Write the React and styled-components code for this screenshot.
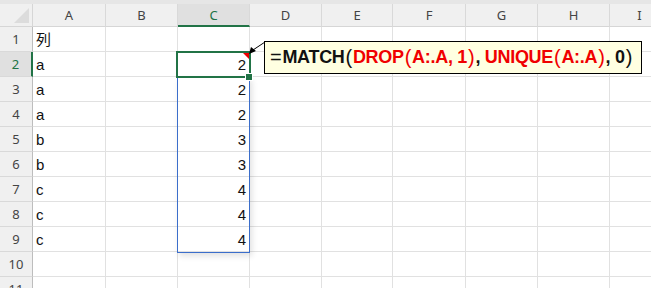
import React from 'react';
import styled, { createGlobalStyle } from 'styled-components';

const GlobalStyle = createGlobalStyle`
    html, body {
        margin: 0;
        padding: 0;
        background: #ffffff;
        overflow: hidden;
    }
    body {
        font-family: "Liberation Sans", "Noto Sans CJK JP", sans-serif;
    }
`;

const COLS = ['A', 'B', 'C', 'D', 'E', 'F', 'G', 'H', 'I'];
const COL_WIDTHS = [73, 72, 72, 72, 71, 73, 72, 72, 60];

const data = [
    ['列', '', ''],
    ['a', '', 2],
    ['a', '', 2],
    ['a', '', 2],
    ['b', '', 3],
    ['b', '', 3],
    ['c', '', 4],
    ['c', '', 4],
    ['c', '', 4],
    ['', '', ''],
    ['', '', ''],
];

const Sheet = styled.div`
    position: relative;
    width: 651px;
    height: 288px;
    overflow: hidden;
    background: #fff;
`;

const TopStrip = styled.div`
    height: 4px;
    background: #e6e6e6;
`;

const Grid = styled.div`
    display: grid;
    grid-template-columns: 33px ${COL_WIDTHS.map((w) => `${w}px`).join(' ')};
    grid-auto-rows: 25px;
    grid-template-rows: 23px;
`;

const Corner = styled.div`
    position: relative;
    background: #f0f0f0;
    border-right: 1px solid #d6d6d6;
    border-bottom: 1px solid #d6d6d6;
    &::after {
        content: '';
        position: absolute;
        right: 3px;
        bottom: 3px;
        width: 0;
        height: 0;
        border-left: 15px solid transparent;
        border-bottom: 15px solid #dcdcdc;
    }
`;

const ColHead = styled.div`
    display: flex;
    align-items: center;
    justify-content: center;
    background: ${({ active }) => (active ? '#e0e0e0' : '#f0f0f0')};
    border-right: 1px solid #d9d9d9;
    border-bottom: ${({ active }) => (active ? '2px solid #217346' : '1px solid #d6d6d6')};
    color: ${({ active }) => (active ? '#217346' : '#444')};
    font-family: "Noto Sans", "Liberation Sans", sans-serif;
    font-size: 13px;
    padding-bottom: ${({ active }) => (active ? '0' : '1px')};
    box-sizing: border-box;
`;

const RowHead = styled.div`
    display: flex;
    align-items: center;
    justify-content: center;
    background: ${({ active }) => (active ? '#e0e0e0' : '#f0f0f0')};
    border-right: ${({ active }) => (active ? '2px solid #217346' : '1px solid #bdbdbd')};
    border-bottom: 1px solid #d9d9d9;
    color: ${({ active }) => (active ? '#217346' : '#444')};
    font-family: "Noto Sans", "Liberation Sans", sans-serif;
    font-size: 13px;
    box-sizing: border-box;
`;

const Cell = styled.div`
    display: flex;
    align-items: flex-end;
    justify-content: ${({ num }) => (num ? 'flex-end' : 'flex-start')};
    border-right: 1px solid #e1e1e1;
    border-bottom: 1px solid #e1e1e1;
    padding: 0 3px 3px 3px;
    font-size: 15px;
    line-height: 17px;
    color: #111;
    box-sizing: border-box;
    overflow: hidden;
    white-space: nowrap;
`;

const Range = styled.div`
    position: absolute;
    left: 177px;
    top: 77px;
    width: 73px;
    height: 176px;
    box-sizing: border-box;
    border: 1px solid #3b6ecb;
    box-shadow: 2px 3px 6px rgba(0, 0, 0, 0.12);
    pointer-events: none;
`;

const ActiveCell = styled.div`
    position: absolute;
    left: 176px;
    top: 51px;
    width: 75px;
    height: 27px;
    box-sizing: border-box;
    border: 2px solid #217346;
    pointer-events: none;
`;

const FillHandle = styled.div`
    position: absolute;
    left: 245px;
    top: 73px;
    width: 6px;
    height: 6px;
    background: #217346;
    border: 1px solid #fff;
`;

const CommentMark = styled.div`
    position: absolute;
    left: 243px;
    top: 53px;
    width: 0;
    height: 0;
    border-left: 6px solid transparent;
    border-top: 6px solid #e00;
`;

const Callout = styled.div`
    position: absolute;
    left: 264px;
    top: 41px;
    width: 378px;
    height: 33px;
    box-sizing: border-box;
    background: #ffffe1;
    border: 1px solid #000;
    display: flex;
    align-items: center;
    padding-left: 4px;
    font-family: "Liberation Sans", "Noto Sans CJK JP", sans-serif;
    font-size: 18px;
    letter-spacing: -0.3px;
    font-weight: bold;
    white-space: nowrap;
    color: #111;
    overflow: hidden;
`;

const Part = styled.span`
    color: ${({ red }) => (red ? '#f00000' : '#111')};
`;

const Paren = styled.span`
    font-weight: normal;
    font-size: 20px;
    color: ${({ red }) => (red ? '#f00000' : '#111')};
    margin: 0 1px;
`;

const Pointer = styled.svg`
    position: absolute;
    left: 244px;
    top: 38px;
    overflow: visible;
`;

const App = () => {
    return (
        <>
            <GlobalStyle />
            <Sheet>
                <TopStrip />
                <Grid>
                    <Corner />
                    {COLS.map((c) => (
                        <ColHead key={c} active={c === 'C'}>{c}</ColHead>
                    ))}
                    {data.map((row, r) => (
                        <React.Fragment key={r}>
                            <RowHead active={r === 1}>{r + 1}</RowHead>
                            {COLS.map((c, ci) => {
                                const v = ci < 3 ? row[ci] : '';
                                return (
                                    <Cell key={c} num={typeof v === 'number'}>
                                        {v}
                                    </Cell>
                                );
                            })}
                        </React.Fragment>
                    ))}
                </Grid>
                <Range />
                <ActiveCell />
                <FillHandle />
                <CommentMark />
                <Pointer width="24" height="20">
                    <line x1="6" y1="14" x2="21" y2="4" stroke="#000" strokeWidth="1" />
                    <polygon points="5,16 7,9 12,13" fill="#000" />
                </Pointer>
                <Callout>
                    <Paren>=</Paren>
                    <Part>MATCH</Part>
                    <Paren>(</Paren>
                    <Part red>DROP</Part>
                    <Paren red>(</Paren>
                    <Part red>A:.A, 1</Part>
                    <Paren red>)</Paren>
                    <Part>,&nbsp;</Part>
                    <Part red>UNIQUE</Part>
                    <Paren red>(</Paren>
                    <Part red>A:.A</Part>
                    <Paren red>)</Paren>
                    <Part>, 0</Part>
                    <Paren>)</Paren>
                </Callout>
            </Sheet>
        </>
    );
};

export default App;
